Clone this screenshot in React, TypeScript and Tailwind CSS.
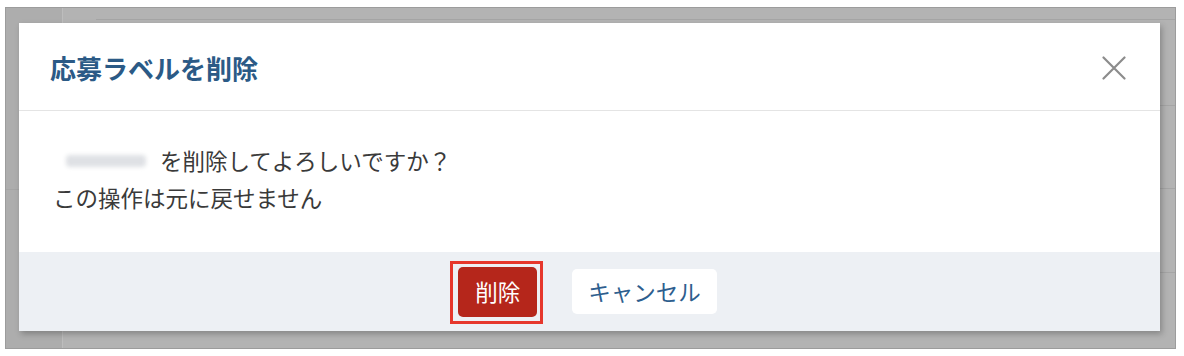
/**
 * Delete-label confirmation modal over a dimmed table page
 */
export default function App() {
  return (
    <div className="w-[1184px] h-[356px] bg-white pl-[5px] pt-[7px] font-['Noto_Sans_CJK_JP','Noto_Sans',sans-serif]">
      {/* Dimmed page behind the modal */}
      <div className="relative w-[1171px] h-[342px] bg-[#b3b3b3] border border-[#9c9c9c] pl-[13px] pt-[15px]">
        {/* faint table lines of the page underneath */}
        <div className="absolute left-[56px] top-0 bottom-0 w-px bg-[#bdbdbd]" />
        <div className="absolute left-0 top-0 bottom-0 w-[56px] bg-[#adadad]" />
        <div className="absolute left-[90px] right-0 top-[11px] h-px bg-[#a5a5a5]" />
        <div className="absolute left-0 w-[13px] top-[181px] h-px bg-[#a5a5a5]" />
        <div className="absolute right-0 w-[16px] top-[97px] h-px bg-[#a5a5a5]" />
        <div className="absolute right-0 w-[16px] top-[180px] h-px bg-[#a5a5a5]" />
        <div className="absolute right-0 w-[16px] top-[264px] h-px bg-[#a5a5a5]" />

        {/* Modal */}
        <div className="relative w-[1141px] h-[308px] bg-white flex flex-col shadow-[2px_3px_6px_rgba(0,0,0,0.25)]">
          <header className="h-[88px] flex items-center justify-between pl-[31px] pr-[34px] border-b border-[#e4e4e4]">
            <h2 className="text-[26px] font-bold text-[#2b5a86] mt-[1px]">応募ラベルを削除</h2>
            <button aria-label="閉じる" className="text-[#8c8c8c] mt-[2px]">
              <svg width="24" height="24" viewBox="0 0 24 24" fill="none" stroke="currentColor" strokeWidth="2.2" strokeLinecap="round">
                <path d="M1.5 1.5 L22.5 22.5 M22.5 1.5 L1.5 22.5" />
              </svg>
            </button>
          </header>

          <div className="flex-1 pl-[34px] pt-[31px] text-[22.5px] leading-[37px] text-[#3a3a3a]">
            <p className="flex items-center">
              <span className="inline-block w-[80px] h-[12px] ml-[13px] mr-[14px] rounded-sm bg-[#dfe1e5] blur-[2px]" />
              を削除してよろしいですか？
            </p>
            <p>この操作は元に戻せません</p>
          </div>

          <footer className="h-[79px] bg-[#edf0f4] flex items-center justify-center gap-[35px] pr-[4px]">
            <div className="relative">
              <button className="h-[50px] px-[17px] rounded-[5px] bg-[#b5261b] text-white text-[22.5px]">削除</button>
              {/* red annotation box */}
              <div className="absolute -left-[8px] -right-[6px] -top-[6px] -bottom-[7px] border-[3px] border-[#e6372c]" />
            </div>
            <button className="h-[45px] px-[16px] rounded-[5px] bg-white text-[#2d5e8e] text-[22.5px]">キャンセル</button>
          </footer>
        </div>
      </div>
    </div>
  );
}
